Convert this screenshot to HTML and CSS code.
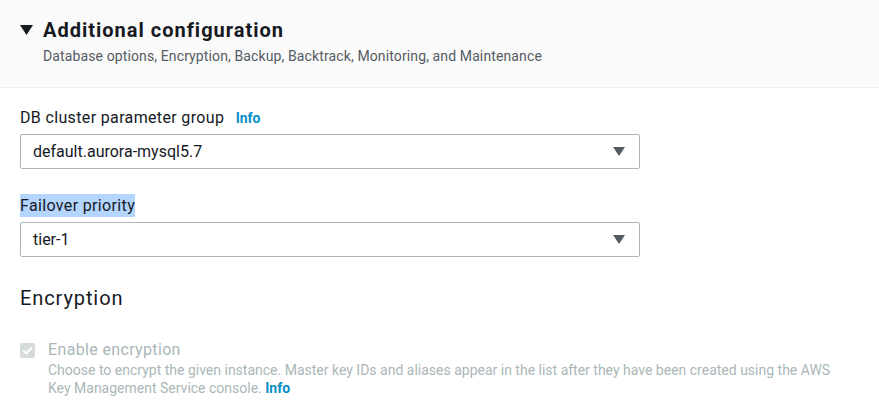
FILE: index.html
```html
<!DOCTYPE html>
<html>
<head>
<meta charset="utf-8">
<link rel="stylesheet" href="styles.css">
</head>
<body>
<div class="panel">
  <div class="panel-header">
    <div class="header-row">
      <svg class="caret" width="13" height="10" viewBox="0 0 13 10"><path d="M0 0H13L6.5 10Z" fill="#16191f"/></svg>
      <h2 class="title">Additional configuration</h2>
    </div>
    <div class="subtitle">Database options, Encryption, Backup, Backtrack, Monitoring, and Maintenance</div>
  </div>
  <div class="panel-body">
    <div class="field">
      <div class="label">DB cluster parameter group <a class="info">Info</a></div>
      <div class="select">
        <span class="select-value">default.aurora-mysql5.7</span>
        <svg class="arrow" width="12" height="9" viewBox="0 0 12 9"><path d="M0 0H12L6 9Z" fill="#545b64"/></svg>
      </div>
    </div>
    <div class="field">
      <div class="label"><span class="selected">Failover priority</span></div>
      <div class="select">
        <span class="select-value">tier-1</span>
        <svg class="arrow" width="12" height="9" viewBox="0 0 12 9"><path d="M0 0H12L6 9Z" fill="#545b64"/></svg>
      </div>
    </div>
    <h3 class="section-title">Encryption</h3>
    <div class="check-row">
      <div class="checkbox">
        <svg width="15" height="15" viewBox="0 0 15 15"><path d="M3.3 7.6L6.2 10.5L11.8 4.5" fill="none" stroke="#fff" stroke-width="2"/></svg>
      </div>
      <div class="check-text">
        <div class="check-label">Enable encryption</div>
        <div class="check-desc">Choose to encrypt the given instance. Master key IDs and aliases appear in the list after they have been created using the AWS Key Management Service console. <a class="info">Info</a></div>
      </div>
    </div>
  </div>
</div>
</body>
</html>
```

FILE: styles.css
```css
* { box-sizing: border-box; }
html, body { margin: 0; padding: 0; background: #fff; }
body {
  font-family: Roboto, "Liberation Sans", sans-serif;
  color: #16191f;
  width: 879px;
  height: 419px;
  overflow: hidden;
}
.panel-header {
  background: #fafafa;
  border-bottom: 1px solid #eaeded;
  padding: 17px 20px 0 20px;
  height: 88px;
}
.header-row {
  display: flex;
  align-items: center;
  gap: 10px;
}
.caret { flex: none; }
.title {
  margin: 0;
  font-size: 20px;
  font-weight: 700;
  line-height: 26px;
  letter-spacing: 1px;
}
.subtitle {
  margin-left: 23px;
  margin-top: 3px;
  font-size: 14px;
  line-height: 20px;
  letter-spacing: 0.12px;
  color: #545b64;
}
.panel-body {
  padding: 19px 20px 0 20px;
}
.field { margin-bottom: 26px; width: 620px; }
.field + .field { margin-bottom: 28px; }
.label {
  font-size: 16px;
  line-height: 22px;
  letter-spacing: 0.35px;
  margin-bottom: 5px;
}
.info {
  color: #0a8fc6;
  font-weight: 700;
  font-size: 14px;
  letter-spacing: 0;
  margin-left: 7px;
}
.selected { background: #b4d5fe; padding: 2px 0; }
.select {
  display: flex;
  align-items: center;
  justify-content: space-between;
  height: 35px;
  border: 1px solid #aab7b8;
  border-radius: 2px;
  padding: 0 14px 0 12px;
  font-size: 16px;
}
.select-value { color: #16191f; }
.section-title {
  margin: 0;
  font-size: 20px;
  font-weight: 400;
  line-height: 26px;
  letter-spacing: 0.9px;
}
.check-row {
  display: flex;
  gap: 13px;
  margin-top: 28px;
}
.checkbox {
  width: 15px;
  height: 15px;
  background: #d5dbdb;
  border-radius: 2px;
  margin-top: 4px;
  flex: none;
}
.checkbox svg { display: block; }
.check-label {
  font-size: 16px;
  line-height: 22px;
  letter-spacing: 0.35px;
  color: #aab7b8;
}
.check-desc {
  font-size: 14px;
  line-height: 18px;
  color: #aab7b8;
  width: 800px;
}
.check-desc .info { margin-left: 0; display: inline-block; line-height: 18px; }
```
